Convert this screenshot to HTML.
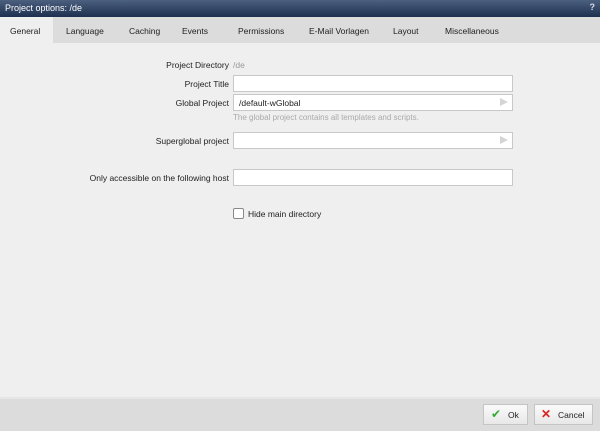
<!DOCTYPE html>
<html><head><style>
*{margin:0;padding:0;box-sizing:border-box}
body{width:600px;height:431px;overflow:hidden;background:#efefef;font-family:"Liberation Sans",sans-serif;font-size:8.5px;color:#222;position:relative}
.title{position:absolute;left:0;top:0;width:600px;height:17px;background:linear-gradient(#4b5f7e,#1d3050);color:#fff;font-size:9px;padding:3px 0 0 5px}
.q{position:absolute;right:5px;top:2px;font-weight:bold;color:#dde}
.tabs{position:absolute;left:0;top:17px;width:600px;height:26px;background:#dcdcdc}
.tab{position:absolute;top:9px}
.act{position:absolute;left:0;top:0;width:53px;height:26px;background:#efefef}
.lbl{position:absolute;text-align:right;right:371px}
.inp{position:absolute;left:233px;width:280px;height:17px;background:#fff;border:1px solid #c8c8c8;padding:3px 0 0 5px}
.arr{position:absolute;right:4px;top:3px;width:0;height:0;border-left:8px solid #d4d4d4;border-top:4px solid transparent;border-bottom:4px solid transparent}
.footer{position:absolute;left:0;top:397px;width:600px;height:34px;background:#dcdcdc;border-top:2px solid #e6e6e6}
.btn{position:absolute;top:404px;height:21px;background:linear-gradient(#fafafa,#e8e8e8);border:1px solid #c4c4c4;padding:5px 0 0 0}
</style></head><body>
<div class="title">Project options: /de<span class="q">?</span></div>
<div class="tabs"><div class="act"></div>
<span class="tab" style="left:10px">General</span>
<span class="tab" style="left:66px">Language</span>
<span class="tab" style="left:129px">Caching</span>
<span class="tab" style="left:182px">Events</span>
<span class="tab" style="left:238px">Permissions</span>
<span class="tab" style="left:309px">E-Mail Vorlagen</span>
<span class="tab" style="left:393px">Layout</span>
<span class="tab" style="left:445px">Miscellaneous</span>
</div>
<div class="lbl" style="top:60px">Project Directory</div>
<div style="position:absolute;left:233px;top:60px;color:#999">/de</div>
<div class="lbl" style="top:79px">Project Title</div>
<div class="inp" style="top:75px"></div>
<div class="lbl" style="top:98px">Global Project</div>
<div class="inp" style="top:94px">/default-wGlobal<div class="arr"></div></div>
<div style="position:absolute;left:233px;top:113px;color:#aaa;font-size:8px">The global project contains all templates and scripts.</div>
<div class="lbl" style="top:136px">Superglobal project</div>
<div class="inp" style="top:132px"><div class="arr"></div></div>
<div class="lbl" style="top:173px">Only accessible on the following host</div>
<div class="inp" style="top:169px"></div>
<div style="position:absolute;left:233px;top:208px;width:11px;height:11px;border:1px solid #888;background:#fff;border-radius:2px"></div>
<div style="position:absolute;left:248px;top:209px">Hide main directory</div>
<div class="footer"></div>
<div class="btn" style="left:483px;width:45px"><span style="color:#3a3;font-size:12px;position:absolute;left:7px;top:2px">✔</span><span style="position:absolute;left:24px">Ok</span></div>
<div class="btn" style="left:534px;width:59px"><span style="color:#d22;font-size:12px;font-weight:bold;position:absolute;left:6px;top:2px">✕</span><span style="position:absolute;left:23px">Cancel</span></div>
</body></html>
